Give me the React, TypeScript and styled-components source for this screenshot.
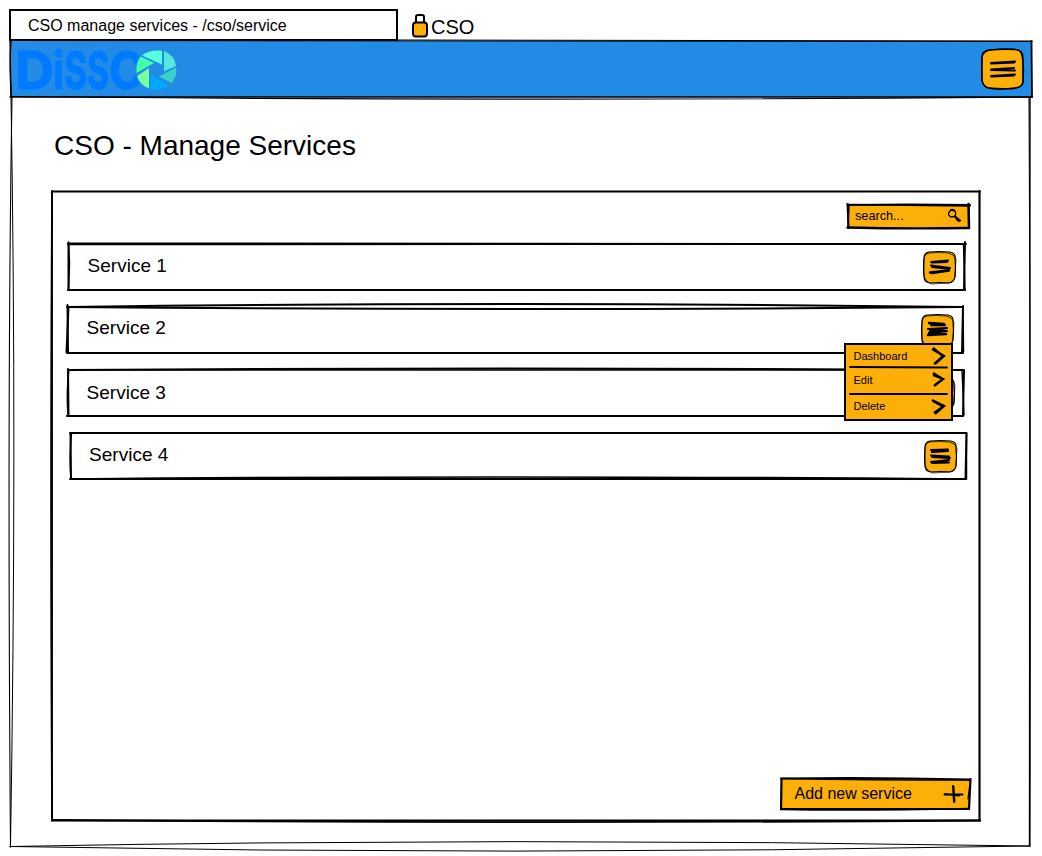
import React from "react";
import styled, { createGlobalStyle } from "styled-components";

const AMBER = "#fcaf08";
const BLUE = "#228be6";
const INK = "#000";

const GlobalStyle = createGlobalStyle`
  * { box-sizing: border-box; }
  body {
    margin: 0;
    background: #fff;
    color: ${INK};
    font-family: "Liberation Sans", Arial, sans-serif;
  }
`;

const Page = styled.main`
  width: 1042px;
  height: 856px;
  overflow: hidden;
  padding-left: 10px;
`;

const TopBar = styled.div`
  display: flex;
  height: 41px;
  padding-top: 9px;
`;

const Tab = styled.div`
  width: 389px;
  height: 32px;
  margin-left: -1px;
  border: 2px solid ${INK};
  padding-left: 17px;
  font-size: 16px;
  line-height: 29px;
  white-space: nowrap;
`;

const Role = styled.div`
  display: flex;
  margin-left: 13px;
  font-size: 20px;
  line-height: 36px;
`;

const LockIcon = styled.svg`
  width: 18px;
  height: 26px;
  margin: 4px 2px 0 0;
`;

const Header = styled.header`
  position: relative;
  display: flex;
  justify-content: space-between;
  width: 1022px;
  height: 56px;
  padding: 8px 9px 0 7px;
`;

const Content = styled.section`
  position: relative;
  width: 1020px;
  height: 750px;
  padding: 33px 0 0 42px;
`;

const Title = styled.h1`
  margin: 0 0 29px 2px;
  font-size: 28px;
  line-height: 32px;
  font-weight: 400;
`;

const Panel = styled.div`
  position: relative;
  display: flex;
  flex-direction: column;
  width: 928px;
  height: 630px;
  padding: 13px 10px 11px 16px;
`;

const Overlay = styled.svg`
  position: absolute;
  inset: 0;
  width: 100%;
  height: 100%;
  overflow: visible;
  pointer-events: none;
`;

const Search = styled.div`
  position: relative;
  align-self: flex-end;
  display: flex;
  justify-content: space-between;
  width: 122px;
  height: 25px;
  margin-bottom: 14px;
  padding: 0 8px 0 7px;
  font-size: 12.7px;
  line-height: 24px;
`;

const SearchIcon = styled.svg`
  position: relative;
  width: 15px;
  height: 16px;
  margin-top: 4px;
`;

const Row = styled.div<{ $shift: number; $gap: number }>`
  position: relative;
  display: flex;
  justify-content: space-between;
  align-items: flex-start;
  width: 897px;
  height: 47px;
  margin-left: ${(p) => p.$shift}px;
  margin-bottom: ${(p) => p.$gap}px;
  padding: 8px 9px 0 19.6px;
`;

const RowLabel = styled.span<{ $drop: number }>`
  position: relative;
  margin-top: ${(p) => p.$drop}px;
  font-size: 19px;
  line-height: 30px;
`;

const MenuButton = styled.div<{ $size: number; $drop?: number; $inset?: number }>`
  position: relative;
  width: ${(p) => p.$size}px;
  height: ${(p) => p.$size}px;
  margin-top: ${(p) => p.$drop ?? 0}px;
  margin-right: ${(p) => p.$inset ?? 0}px;
`;

const Menu = styled.div`
  position: absolute;
  z-index: 5;
  left: 776.5px;
  top: 37px;
  width: 109px;
  height: 78px;
  border: 2px solid ${INK};
  background: ${AMBER};
`;

const MenuItem = styled.div<{ $height: number }>`
  position: relative;
  display: flex;
  justify-content: space-between;
  align-items: center;
  height: ${(p) => p.$height}px;
  padding: 0 5px 0 8px;
  font-size: 11px;
`;

const Chevron = styled.svg`
  width: 16px;
  height: 20px;
  overflow: visible;
`;

const AddButton = styled.div`
  position: relative;
  align-self: flex-end;
  display: flex;
  justify-content: space-between;
  width: 189px;
  height: 31px;
  margin-top: auto;
  padding: 0 6px 0 13.5px;
  font-size: 16px;
  line-height: 30px;
`;

const PlusIcon = styled.svg`
  position: relative;
  width: 22px;
  height: 22px;
  margin-top: 4px;
`;

const Label = styled.span`
  position: relative;
`;

const Logo = styled.svg`
  position: relative;
  width: 162px;
  height: 44px;
  overflow: visible;
`;

type Stroke = { d: string; w?: number };

function Sketch({ fill, area, strokes }: { fill?: string; area?: string; strokes: Stroke[] }) {
  return (
    <Overlay fill="none" stroke={INK} strokeLinecap="round" strokeLinejoin="round">
      {area && <path d={area} fill={fill} stroke="none" />}
      {strokes.map((s) => (
        <path key={s.d} d={s.d} strokeWidth={s.w ?? 2} />
      ))}
    </Overlay>
  );
}

function DisscoLogo() {
  const letters = [
    { c: "D", x: -2, w: 39 },
    { c: "i", x: 36, w: 11 },
    { c: "S", x: 47, w: 23 },
    { c: "S", x: 70, w: 22 },
    { c: "C", x: 92, w: 35 },
  ];
  const blades = [
    ["#55ffdd", "M125 6.500Q133 .5 145 1.800V15.500Z"],
    ["#55e6e0", "M147 2Q157.500 6 159 17L147 22.500Z"],
    ["#3cd0c8", "M159 18.500Q160.500 27 154.500 34L142 27.500Z"],
    ["#00aaff", "M134 26L151.500 36.500Q144 42 134 40Z"],
    ["#77ffa0", "M132 19V39.500Q122 35.500 120 27Z"],
    ["#44ffaa", "M123.500 7.500L137 14L119.500 24Q118.500 14 123.500 7.500Z"],
  ];
  return (
    <Logo viewBox="0 0 162 44">
      <g fill="#007bff" stroke="#007bff" strokeWidth="1.200" fontFamily="Inter, sans-serif" fontWeight="700" fontSize="52">
        {letters.map((l) => (
          <text key={l.x} x={l.x} y="39.500" textLength={l.w} lengthAdjust="spacingAndGlyphs">
            {l.c}
          </text>
        ))}
      </g>
      <circle cx="139.500" cy="21" r="20.500" fill={BLUE} />
      {blades.map(([color, d]) => (
        <path key={d} d={d} fill={color} />
      ))}
    </Logo>
  );
}

const BURGERS: Stroke[][] = [
  [
    { d: "M8 11L25 9.500L24 11L9 11.500", w: 2 },
    { d: "M8 14.500L27 17L9 16L26 18", w: 2 },
    { d: "M7 21.500L26 19.500L9 22", w: 2.4 },
  ],
  [
    { d: "M8 9L23 10L10 11L24 11", w: 2.4 },
    { d: "M7 15L26 14L9 17L26 17", w: 2.2 },
    { d: "M8 19L24 17M7 21L25 20", w: 2.4 },
  ],
  [
    { d: "M7 10L24 9.500L8 12L24 11", w: 2 },
    { d: "M7 15.500L25 16.500L8 17L26 18", w: 2 },
    { d: "M7 22L25 20L8 23L25 22.500", w: 1.9 },
  ],
];

function RowMenuButton({ variant, drop, inset }: { variant: number; drop: number; inset: number }) {
  return (
    <MenuButton $size={33} $drop={drop} $inset={inset}>
      <Sketch
        fill={AMBER}
        area="M6 1H27Q32 1 32 6V26Q32 32 26 32H7Q1 32 1 26V7Q1 1 6 1Z"
        strokes={[
          { d: "M6 1Q17 0 27 1Q33 2 32 8Q33 17 32 26Q31 31 26 32Q16 31 7 32Q1 31 1 26Q0 16 1 7Q1 2 6 1Z", w: 1.2 },
          { d: "M5 2Q16 1 25 2Q31 3 33 8L32 24Q32 31 25 32L9 33Q2 31 1 24L1 9Q1 4 5 2Z", w: 0.7 },
          ...BURGERS[variant],
        ]}
      />
    </MenuButton>
  );
}

const ROWS = [
  {
    name: "Service 1", shift: 0, gap: 15.5, drop: 0, variant: 0, buttonDrop: 0, inset: 0,
    strokes: [
      { d: "M0 .5Q450 -.5 898 1" }, { d: "M0 1.500Q450 1 897 1", w: 1.7 },
      { d: "M897 -1L896 46" }, { d: "M895.500 1L897 47", w: 1.5 },
      { d: "M0 47H897", w: 2.1 }, { d: "M.5 0L.5 47" }, { d: "M.5 -1L1.500 20L.5 46", w: 1.5 },
    ],
  },
  {
    name: "Service 2", shift: -1, gap: 16.5, drop: -0.5, variant: 1, buttonDrop: 0.5, inset: 1,
    strokes: [
      { d: "M1 1Q448 -5 896 1" }, { d: "M0 1Q448 5 896 1" },
      { d: "M896 0L895 47" }, { d: "M896 1L896.500 46", w: 1.5 },
      { d: "M0 47H896", w: 2.2 }, { d: "M.5 -1L1 46" }, { d: "M1.500 1L-.5 46", w: 2 },
    ],
  },
  {
    name: "Service 3", shift: -1, gap: 17, drop: 1, variant: 2, buttonDrop: 0, inset: 0,
    strokes: [
      { d: "M1 1Q430 -2 896 1" }, { d: "M1 1Q400 0 896 1", w: 1.6 },
      { d: "M897 1L896 46" }, { d: "M895 1L897 46", w: 1.4 },
      { d: "M0 47H896", w: 2.2 }, { d: "M1 0L1.500 47" }, { d: "M2 1Q-1 23 1 46", w: 1.3 },
    ],
  },
  {
    name: "Service 4", shift: 1.5, gap: 0, drop: -1, variant: 2, buttonDrop: -1, inset: 0.5,
    strokes: [
      { d: "M0 0H896", w: 2.2 }, { d: "M896.500 0L895.500 46" }, { d: "M896.500 0L896.500 46", w: 1.5 },
      { d: "M1 46Q400 42 896 46", w: 1.7 }, { d: "M0 46H896", w: 2 },
      { d: "M.5 0L1 46" }, { d: "M1.500 0Q-1 25 1 46", w: 1.5 },
    ],
  },
];

const MENU_ITEMS = [
  { label: "Dashboard", height: 22, arrow: "M3 2L13 10L4 18M2 3L14 10L5 18", rule: "M4 22L101 22.500" },
  { label: "Edit", height: 27, arrow: "M3 3L13 9L4 16M3 5L13 9L5 15", rule: "M4 27H101" },
  { label: "Delete", height: 25, arrow: "M2 4L14 10L4 17M3 5L12 10L13 11L5 18" },
];

export default function App() {
  return (
    <>
      <GlobalStyle />
      <Page>
        <TopBar>
          <Tab>CSO manage services - /cso/service</Tab>
          <Role>
            <LockIcon viewBox="0 0 18 26" fill="none" stroke={INK} strokeWidth="2">
              <path d="M5 10V4Q5 2 7 2H11Q13 2 13 4V10" />
              <rect x="2" y="9.500" width="14" height="14" rx="3" fill={AMBER} />
            </LockIcon>
            CSO
          </Role>
        </TopBar>

        <Header>
          <Sketch
            fill={BLUE}
            area="M0 0H1022V56H0Z"
            strokes={[
              { d: "M0 -.5Q500 -1.500 1022 .5", w: 1.2 }, { d: "M388 -1L1022 0", w: 1 },
              { d: "M0 56Q500 54 1022 56", w: 1.4 }, { d: "M1 55.500Q500 60.500 1022 56", w: 1.1 },
              { d: "M1021.500 0L1022 56", w: 1.8 }, { d: "M1 0Q-1 28 1.500 56", w: 1.3 }, { d: "M0 0L1 56", w: 1.3 },
            ]}
          />
          <DisscoLogo />
          <MenuButton $size={41}>
            <Sketch
              fill={AMBER}
              area="M8 1H33Q40 1 40 9V31Q40 40 32 40H9Q0 40 0 31V9Q0 1 8 1Z"
              strokes={[
                { d: "M7 1Q18 0 33 .5Q41 1 41 9L41 31Q42 38 33 39Q20 41 9 39.500Q1 39 0 31V10Q-1 2 7 1Z", w: 1.5 },
                { d: "M8 1Q20 -1 31 0Q39 0 40 8Q43 21 41 33Q39 39 31 40L10 39Q2 39 0 32Q-1 20 0 9Q1 3 8 1Z", w: 0.9 },
                { d: "M9 14L33 12.500L32 13.500L9 14.500", w: 2.1 },
                { d: "M9 20.500L32 19M9 21L33 21.500", w: 2 },
                { d: "M9 27L33 25.500M9 27.500L32 26.500", w: 2 },
              ]}
            />
          </MenuButton>
        </Header>

        <Content>
          <Sketch
            strokes={[
              { d: "M2 0Q-3 300 .5 750", w: 1.1 }, { d: "M1 0Q7 350 .5 750", w: 1 },
              { d: "M1020 0L1019.500 749", w: 1.4 }, { d: "M1019 1Q1021 380 1020 749", w: 1 },
              { d: "M0 749.500Q500 740 1020 749", w: 1 }, { d: "M0 749.500Q500 759 1020 749", w: 1 },
            ]}
          />
          <Title>CSO - Manage Services</Title>
          <Panel>
            <Sketch
              strokes={[
                { d: "M0 .5H928", w: 2 }, { d: "M927.500 0L927.500 629.500", w: 2.2 },
                { d: "M0 629.500H928", w: 2 }, { d: "M0 629Q464 633 928 629.500", w: 1.8 },
                { d: "M0 1Q-2 300 0 629.500", w: 1.6 }, { d: "M0 0V629.500", w: 1.9 },
              ]}
            />
            <Search>
              <Sketch
                fill={AMBER}
                area="M0 1H122V24H0Z"
                strokes={[
                  { d: "M-.5 1Q60 0 122 1" }, { d: "M0 .5L122 2", w: 1.3 },
                  { d: "M120.500 0L121 24", w: 2.5 }, { d: "M-.5 23.500Q60 25 121 24", w: 2.3 },
                  { d: "M-.5 0L.5 24" }, { d: "M1 1L0 24", w: 1.5 },
                ]}
              />
              <Label>search...</Label>
              <SearchIcon viewBox="0 0 15 16" fill="none" stroke={INK} strokeWidth="1.300">
                <path d="M3 2Q7 0 8.500 4Q9.500 8 5.500 9Q1.500 9 1.500 5L4 2L8 3" />
                <path d="M7 8L12.500 14M8 8L14 13M9 11L11 13" />
              </SearchIcon>
            </Search>

            {ROWS.map((row) => (
              <Row key={row.name} $shift={row.shift} $gap={row.gap}>
                <Sketch strokes={row.strokes} />
                <RowLabel $drop={row.drop}>{row.name}</RowLabel>
                <RowMenuButton variant={row.variant} drop={row.buttonDrop} inset={row.inset} />
                {row.name === "Service 2" && (
                  <Menu>
                    {MENU_ITEMS.map((item) => (
                      <MenuItem key={item.label} $height={item.height}>
                        {item.rule && <Sketch strokes={[{ d: item.rule, w: 1.8 }]} />}
                        <Label>{item.label}</Label>
                        <Chevron viewBox="0 0 16 20" fill="none" stroke={INK} strokeWidth="2.300">
                          <path d={item.arrow} />
                        </Chevron>
                      </MenuItem>
                    ))}
                  </Menu>
                )}
              </Row>
            ))}

            <AddButton>
              <Sketch
                fill={AMBER}
                area="M1 0L189 1L188 30H0Z"
                strokes={[
                  { d: "M0 -.5Q90 -2 189 .5" }, { d: "M0 -.5Q90 1 189 1", w: 1.7 },
                  { d: "M189.500 0L188 30", w: 2.2 }, { d: "M187 20L189.500 0", w: 1.2 },
                  { d: "M0 30H188", w: 2.2 }, { d: "M1 30.500Q80 32 188 29.500", w: 1.5 },
                  { d: "M.5 0L0 30.500", w: 2.2 },
                ]}
              />
              <Label>Add new service</Label>
              <PlusIcon viewBox="0 0 22 22" fill="none" stroke={INK} strokeWidth="2" strokeLinecap="round">
                <path d="M11 3L12 19M11.500 4L12.500 18" />
                <path d="M2.500 11.500L20.500 11.500M3 11L17 12.500" />
              </PlusIcon>
            </AddButton>
          </Panel>
        </Content>
      </Page>
    </>
  );
}
